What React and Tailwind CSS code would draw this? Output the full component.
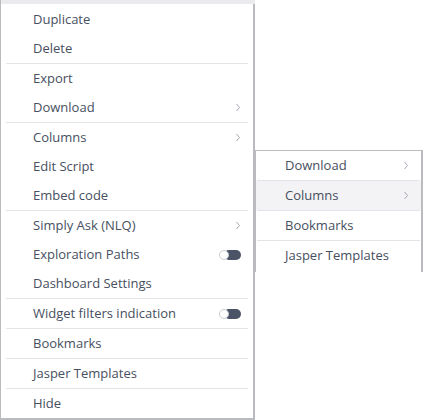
import React from 'react';

const font = { fontFamily: '"Open Sans", "Noto Sans", sans-serif' };

function Chevron() {
  return (
    <svg width="6" height="9" viewBox="0 0 6 9" className="text-[#a3a7b0]">
      <path d="M1.5 1 L4.5 4.5 L1.5 8" fill="none" stroke="currentColor" strokeWidth="1" />
    </svg>
  );
}

function Toggle() {
  return (
    <div className="relative w-[22px] h-[10px]">
      <div className="absolute right-0 top-0 w-[17px] h-[10px] rounded-full bg-[#4b5466]" />
      <div className="absolute left-0 top-0 w-[10px] h-[10px] rounded-full bg-white border border-[#c9ccd2]" />
    </div>
  );
}

function Item({ label, chevron, toggle, active, pad = 'pl-[32px] pr-[12px]' }) {
  return (
    <div
      className={`h-[29px] flex items-center justify-between text-[13px] text-[#474f60] ${pad} ${
        active ? 'bg-[#f3f3f5]' : ''
      }`}
    >
      <span>{label}</span>
      {chevron && <Chevron />}
      {toggle && <Toggle />}
    </div>
  );
}

function Sep({ className = 'mx-[5px]' }) {
  return <div className={`h-px bg-[#e3e4e7] ${className}`} />;
}

// main widget menu, grouped by separators
const groups = [
  [{ label: 'Duplicate' }, { label: 'Delete' }],
  [{ label: 'Export' }, { label: 'Download', chevron: true }],
  [{ label: 'Columns', chevron: true }, { label: 'Edit Script' }, { label: 'Embed code' }],
  [
    { label: 'Simply Ask (NLQ)', chevron: true },
    { label: 'Exploration Paths', toggle: true },
    { label: 'Dashboard Settings' },
  ],
  [{ label: 'Widget filters indication', toggle: true }],
  [{ label: 'Bookmarks' }],
  [{ label: 'Jasper Templates' }],
  [{ label: 'Hide' }],
];

export default function App() {
  return (
    <div className="relative w-[423px] h-[420px] bg-white overflow-hidden" style={font}>
      <div className="w-[255px] h-[420px] border-l border-r-2 border-b-2 border-[#b9bbbf] bg-white flex flex-col">
        <div className="h-[4px] bg-[#ebebed] -mr-[2px]" />
        <div className="h-px" />
        {groups.map((g, gi) => (
          <React.Fragment key={gi}>
            {gi > 0 && <Sep />}
            {g.map((it) => (
              <Item key={it.label} {...it} />
            ))}
          </React.Fragment>
        ))}
      </div>

      {/* nested submenu */}
      <div className="absolute left-[255px] top-[150px] w-[168px] h-[122px] bg-white border-l border-t border-r-2 border-[#b9bbbf] flex flex-col">
        <Item label="Download" chevron pad="pl-[29px] pr-[12px]" />
        <Sep className="mx-[1px]" />
        <Item label="Columns" chevron active pad="pl-[29px] pr-[12px]" />
        <Sep className="mx-[1px]" />
        <Item label="Bookmarks" pad="pl-[29px] pr-[12px]" />
        <Sep className="mx-[1px]" />
        <Item label="Jasper Templates" pad="pl-[29px] pr-[12px]" />
      </div>
    </div>
  );
}
